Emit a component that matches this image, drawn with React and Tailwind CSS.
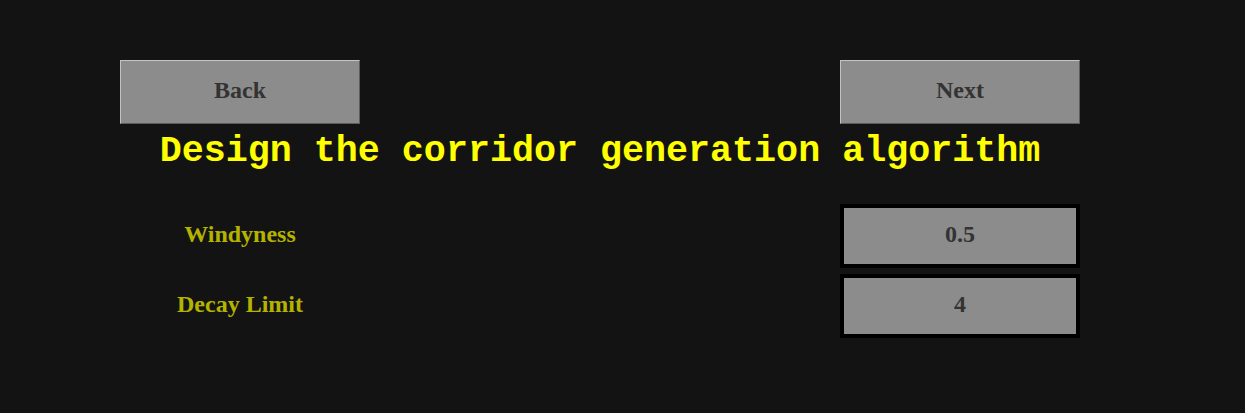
import React from 'react';

const NavButton = ({ label }) => (
  <button className="w-[240px] h-[64px] pb-[4px] bg-[#8c8c8c] border border-t-[#c4c4c4] border-l-[#c4c4c4] border-b-[#5c5c5c] border-r-[#5c5c5c] text-[#333333] text-[24px] font-bold font-['Liberation_Serif',serif]">
    {label}
  </button>
);

const Field = ({ label, value }) => (
  <div className="flex items-center justify-between h-[64px]">
    <div className="w-[240px] pb-[4px] text-center text-[24px] font-bold text-[#b3b300] font-['Liberation_Serif',serif]">
      {label}
    </div>
    <div className="w-[240px] h-[64px] pb-[4px] border-4 border-black bg-[#8c8c8c] flex items-center justify-center text-[24px] font-bold text-[#333333] font-['Liberation_Serif',serif]">
      {value}
    </div>
  </div>
);

export default function App() {
  return (
    <div className="w-[1245px] h-[413px] bg-[#131313] pl-[120px] pt-[60px]">
      <div className="w-[960px]">
        {/* Navigation */}
        <div className="flex justify-between">
          <NavButton label="Back" />
          <NavButton label="Next" />
        </div>

        {/* Title */}
        <h1 className="mt-[7px] h-[40px] leading-[40px] text-center text-[36.7px] font-bold text-[#ffff00] font-['Liberation_Mono',monospace]">
          Design the corridor generation algorithm
        </h1>

        {/* Parameters */}
        <div className="mt-[33px] flex flex-col gap-[6px]">
          <Field label="Windyness" value="0.5" />
          <Field label="Decay Limit" value="4" />
        </div>
      </div>
    </div>
  );
}
